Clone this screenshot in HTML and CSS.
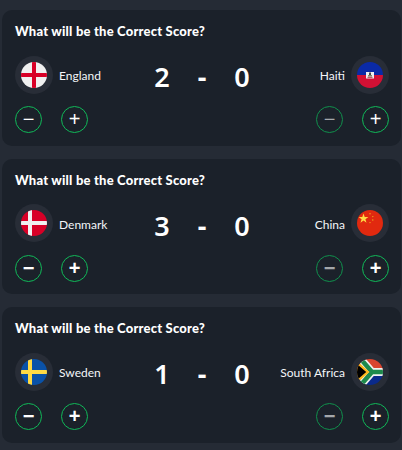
FILE: index.html
```html
<!DOCTYPE html>
<html lang="en">
<head>
<meta charset="utf-8">
<title>Correct Score</title>
<link rel="stylesheet" href="styles.css">
</head>
<body>
<main class="list">
  <section class="card">
    <h2 class="title">What will be the Correct Score?</h2>
    <div class="match">
      <div class="team">
        <span class="flag-wrap"><svg class="flag" viewBox="0 0 26 26"><rect width="26" height="26" fill="#f0f0f0"/><rect x="11" width="4" height="26" fill="#d80027"/><rect y="11" width="26" height="4" fill="#d80027"/></svg></span>
        <span class="name">England</span>
      </div>
      <div class="score"><span class="num">2</span><span class="dash">-</span><span class="num">0</span></div>
      <div class="team team-away">
        <span class="name">Haiti</span>
        <span class="flag-wrap"><svg class="flag" viewBox="0 0 26 26"><rect width="26" height="13" fill="#0a2aa6"/><rect y="13" width="26" height="13" fill="#d21034"/><rect x="9" y="10" width="8" height="6.5" fill="#f0f0f0"/><rect x="12" y="10.5" width="2" height="2.5" fill="#4a4a4a"/><rect x="11" y="13" width="4" height="1.5" fill="#7d8a6a"/><rect x="10.5" y="14.8" width="5" height="1" fill="#a8434f"/></svg></span>
      </div>
    </div>
    <div class="controls">
      <div class="group"><button class="btn">−</button><button class="btn">+</button></div>
      <div class="group"><button class="btn btn-dim">−</button><button class="btn">+</button></div>
    </div>
  </section>

  <section class="card">
    <h2 class="title">What will be the Correct Score?</h2>
    <div class="match">
      <div class="team">
        <span class="flag-wrap"><svg class="flag" viewBox="0 0 26 26"><rect width="26" height="26" fill="#d80027"/><rect x="7" width="4" height="26" fill="#f0f0f0"/><rect y="11" width="26" height="4" fill="#f0f0f0"/></svg></span>
        <span class="name">Denmark</span>
      </div>
      <div class="score"><span class="num">3</span><span class="dash">-</span><span class="num">0</span></div>
      <div class="team team-away">
        <span class="name">China</span>
        <span class="flag-wrap"><svg class="flag" viewBox="0 0 26 26"><rect width="26" height="26" fill="#e1290f"/><polygon points="6.5,3.6 7.7,7.1 11.4,7.1 8.4,9.3 9.5,12.8 6.5,10.6 3.5,12.8 4.6,9.3 1.6,7.1 5.3,7.1" fill="#ffda44"/><circle cx="13" cy="3.8" r="0.7" fill="#f2a71b"/><circle cx="15.8" cy="6.6" r="0.7" fill="#f2a71b"/><circle cx="15.8" cy="10" r="0.7" fill="#f2a71b"/><circle cx="13" cy="12.6" r="0.7" fill="#f2a71b"/></svg></span>
      </div>
    </div>
    <div class="controls">
      <div class="group"><button class="btn btn-bold">−</button><button class="btn btn-bold">+</button></div>
      <div class="group"><button class="btn btn-dim btn-bold">−</button><button class="btn btn-bold">+</button></div>
    </div>
  </section>

  <section class="card">
    <h2 class="title">What will be the Correct Score?</h2>
    <div class="match">
      <div class="team">
        <span class="flag-wrap"><svg class="flag" viewBox="0 0 26 26"><rect width="26" height="26" fill="#0a52a8"/><rect x="7" width="4" height="26" fill="#ffda44"/><rect y="11" width="26" height="4" fill="#ffda44"/></svg></span>
        <span class="name">Sweden</span>
      </div>
      <div class="score"><span class="num">1</span><span class="dash">-</span><span class="num">0</span></div>
      <div class="team team-away">
        <span class="name">South Africa</span>
        <span class="flag-wrap"><svg class="flag" viewBox="0 0 26 26"><rect width="26" height="13" fill="#d9442f"/><rect y="13" width="26" height="13" fill="#0a2a8c"/><path d="M2 -2 L15 13 H28 M2 28 L15 13" fill="none" stroke="#f0f0f0" stroke-width="8"/><path d="M2 -2 L15 13 H28 M2 28 L15 13" fill="none" stroke="#1d8a4c" stroke-width="4.6"/><polygon points="0,2 12.5,13 0,24" fill="#ffb81c"/><polygon points="0,5 9.2,13 0,21" fill="#000"/></svg></span>
      </div>
    </div>
    <div class="controls">
      <div class="group"><button class="btn btn-bold">−</button><button class="btn btn-bold">+</button></div>
      <div class="group"><button class="btn btn-dim btn-bold">−</button><button class="btn btn-bold">+</button></div>
    </div>
  </section>
</main>
</body>
</html>
```
FILE: styles.css
```css
* { box-sizing: border-box; }
html, body { margin: 0; padding: 0; }
body {
  width: 402px;
  height: 450px;
  overflow: hidden;
  background: #252b35;
  font-family: "Lato", "Noto Sans", sans-serif;
  color: #fff;
}
.list {
  display: flex;
  flex-direction: column;
  gap: 13px;
  padding: 10px 1px 0 2px;
}
.card {
  height: 135.5px;
  background: #1b212a;
  border-radius: 10px;
  padding: 14px 12px 0 13px;
}
.title {
  margin: 0;
  font-size: 13px;
  line-height: 15px;
  font-weight: 900;
  letter-spacing: 0.2px;
}
.match {
  display: grid;
  grid-template-columns: 1fr auto 1fr;
  align-items: center;
  margin-top: 16px;
  height: 38px;
}
.team {
  display: flex;
  align-items: center;
  gap: 6px;
}
.team-away { justify-content: flex-end; }
.flag-wrap {
  flex: none;
  display: flex;
  align-items: center;
  justify-content: center;
  width: 38px;
  height: 38px;
  border-radius: 50%;
  background: #282d37;
}
.flag {
  display: block;
  width: 26px;
  height: 26px;
  border-radius: 50%;
}
.name {
  padding-top: 2px;
  font-size: 12px;
  color: #f4f6f8;
  white-space: nowrap;
}
.score {
  display: grid;
  grid-template-columns: 40px 40px 40px;
  justify-items: center;
  padding-top: 5px;
  font-family: "Noto Sans", sans-serif;
  font-size: 27px;
  line-height: 34px;
  font-weight: 600;
}
.dash { font-weight: 700; }
.controls {
  display: flex;
  justify-content: space-between;
  margin-top: 13px;
}
.group {
  display: flex;
  gap: 19px;
}
.btn {
  display: flex;
  align-items: center;
  justify-content: center;
  width: 27px;
  height: 27px;
  padding: 0 0 1px;
  border: 1px solid #10b858;
  border-radius: 50%;
  background: transparent;
  color: #fff;
  font-family: "Liberation Sans", sans-serif;
  font-size: 20px;
  line-height: 1;
}
.btn-bold { font-weight: 700; }
.btn-dim {
  color: #a4a7ab;
  border-color: #10904c;
}
```
